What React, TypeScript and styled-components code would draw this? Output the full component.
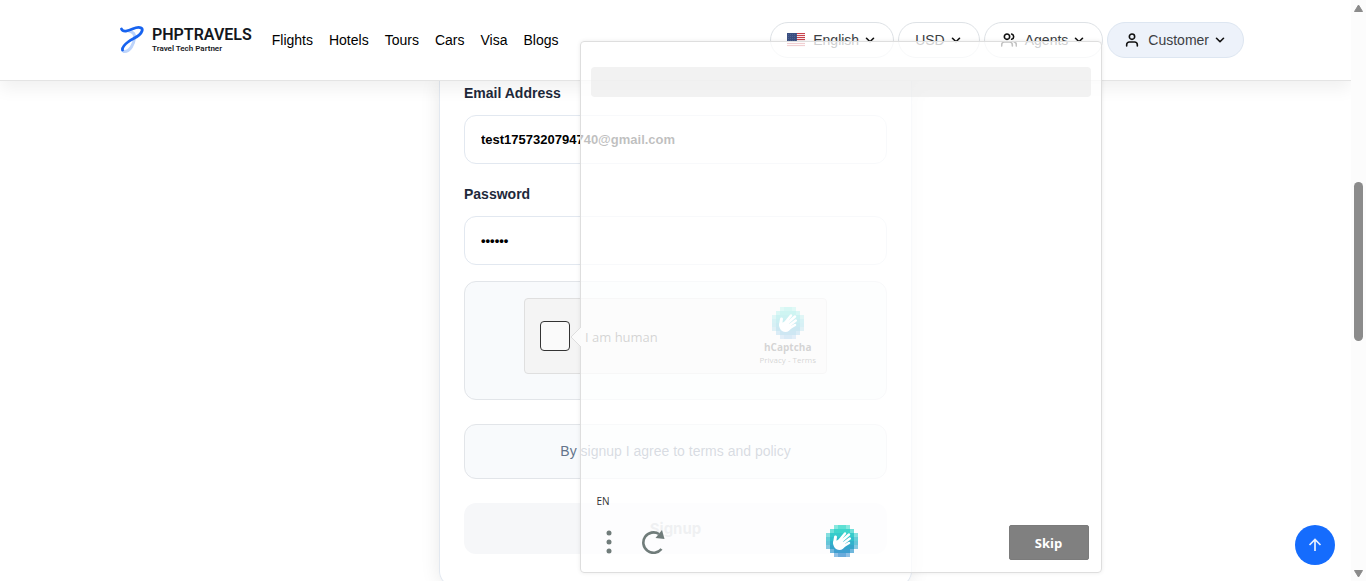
import React from "react";
import styled, { createGlobalStyle } from "styled-components";

const sans = `"Liberation Sans", Arial, sans-serif`;
const captchaFont = `"Open Sans", "Noto Sans", sans-serif`;

const GlobalStyle = createGlobalStyle`
  *, *::before, *::after { box-sizing: border-box; }
  body { margin: 0; background: #fff; color: #000; font-family: ${sans}; font-size: 14px; line-height: 20px; }
  button, input { font: inherit; color: inherit; margin: 0; }
  a { color: inherit; text-decoration: none; }
`;

const Window = styled.div`
  display: flex;
  height: 100vh;
  overflow: hidden;
`;

const Page = styled.div`
  position: relative;
  flex: 1;
  min-width: 0;
  display: flex;
  flex-direction: column;
  overflow: hidden;
`;

const Header = styled.header`
  position: relative;
  z-index: 1;
  flex: none;
  height: 81px;
  background: #fff;
  border-bottom: 1px solid #e4e4e4;
  box-shadow: 0 8px 16px rgba(0, 0, 0, 0.06);
`;

const HeaderInner = styled.div`
  display: flex;
  align-items: center;
  justify-content: space-between;
  height: 80px;
  max-width: 1137px;
  margin: 0 auto;
  padding-left: 12px;
`;

const Cluster = styled.div`
  display: flex;
  align-items: center;
  gap: 20px;
`;

const Brand = styled.a`
  display: flex;
  align-items: center;
  gap: 8px;
  font-family: Roboto, sans-serif;
  color: #14171c;
`;

const BrandText = styled.span`
  display: flex;
  flex-direction: column;
`;

const BrandName = styled.strong`
  font-size: 16px;
  line-height: 18px;
  font-weight: 600;
`;

const BrandTag = styled.span`
  font-size: 8px;
  line-height: 10px;
  font-weight: 600;
`;

const Nav = styled.nav`
  display: flex;
  gap: 16px;
`;

const Pills = styled.div`
  display: flex;
  gap: 4px;
`;

const Pill = styled.button<{ $filled?: boolean }>`
  display: flex;
  align-items: center;
  gap: 8px;
  height: 36px;
  padding: 0 16px;
  border: 1px solid ${(p) => (p.$filled ? "#dde6f1" : "#dee2e6")};
  border-radius: 18px;
  background: ${(p) => (p.$filled ? "#edf2fa" : "#fff")};
  color: #3c4043;
`;

const PillLabel = styled.span`
  display: flex;
  align-items: center;
  gap: 4px;
`;

const Main = styled.main`
  display: flex;
  justify-content: center;
  align-items: flex-start;
`;

const Card = styled.form`
  flex: none;
  width: 473px;
  padding: 2px 24px 32px;
  border: 1px solid #e2e8f0;
  border-top: 0;
  border-radius: 0 0 16px 16px;
  box-shadow: 0 0 20px rgba(0, 0, 0, 0.09);
`;

const Field = styled.div`
  display: flex;
  flex-direction: column;
  gap: 12px;
  margin-bottom: 20px;

  & + & { margin-bottom: 16px; }
`;

const Label = styled.label`
  font-weight: 700;
  color: #1e293b;
`;

const TextInput = styled.input`
  width: 100%;
  height: 49px;
  padding: 0 16px;
  border: 1px solid #e2e8f0;
  border-radius: 12px;
  background: #fff;
  font-size: 13px;
  font-weight: 700;
  color: #000;
`;

const Panel = styled.div`
  display: flex;
  justify-content: center;
  align-items: flex-start;
  min-height: 55px;
  margin-bottom: 24px;
  padding: 16px;
  border: 1px solid #e2e5e9;
  border-radius: 12px;
  background: #f8fafc;
  color: #64748b;
`;

const CaptchaPanel = styled(Panel)`
  height: 119px;
`;

const Captcha = styled.div`
  display: flex;
  align-items: center;
  width: 303px;
  height: 76px;
  padding: 0 10px 0 15px;
  border: 1px solid #dfdfdf;
  border-radius: 4px;
  background: #f4f4f4;
  font-family: ${captchaFont};
  color: #555;
`;

const Check = styled.input`
  appearance: none;
  flex: none;
  width: 30px;
  height: 30px;
  border: 1px solid #333;
  border-radius: 4px;
  background: #fafafa;
`;

const CheckLabel = styled.label`
  flex: 1;
  padding: 2px 0 0 15px;
  font-size: 13px;
`;

const CaptchaBrand = styled.div`
  display: flex;
  flex-direction: column;
  align-items: center;
  font-size: 8px;
  line-height: 10px;
  white-space: nowrap;
`;

const CaptchaName = styled.strong`
  font-size: 10px;
  line-height: 16px;
`;

const Submit = styled.button`
  width: 100%;
  height: 51px;
  border: 0;
  border-radius: 12px;
  background: #f6f7f9;
  color: #bfc4cb;
  font-family: Inter, sans-serif;
  font-size: 15px;
  font-weight: 700;
`;

const Challenge = styled.section`
  position: absolute;
  z-index: 2;
  top: 41px;
  left: calc(50% - 96px);
  display: flex;
  flex-direction: column;
  width: 522px;
  height: 532px;
  padding: 25px 10px 8px;
  border: 1px solid #dedede;
  border-radius: 4px;
  background: rgba(255, 255, 255, 0.75);
  box-shadow: 0 0 4px rgba(0, 0, 0, 0.08);
  font-family: ${captchaFont};
`;

const Pointer = styled.svg`
  position: absolute;
  top: 284px;
  left: -11px;
`;

const Prompt = styled.div`
  height: 30px;
  border-radius: 4px;
  background: rgba(230, 230, 230, 0.5);
`;

const Language = styled.button`
  margin-top: auto;
  align-self: flex-start;
  padding: 0 6px;
  border: 0;
  background: none;
  font-size: 10px;
  line-height: 16px;
  color: #333;
`;

const Footer = styled.footer`
  display: flex;
  align-items: flex-start;
  justify-content: space-between;
  padding: 16px 2px 4px 4px;
`;

const Tools = styled.div`
  display: flex;
  flex: 1;
  gap: 16px;
`;

const ToolButton = styled.button`
  display: flex;
  justify-content: center;
  align-items: center;
  width: 28px;
  height: 34px;
  padding: 0;
  border: 0;
  background: none;
`;

const SkipArea = styled.div`
  display: flex;
  flex: 1;
  justify-content: flex-end;
`;

const Skip = styled.button`
  width: 80px;
  height: 35px;
  border: 1px solid #7b7b7b;
  border-radius: 2px;
  background: #808080;
  color: #fff;
  font-size: 13px;
  font-weight: 700;
`;

const ToTop = styled.button`
  position: absolute;
  right: 16px;
  bottom: 16px;
  display: flex;
  align-items: center;
  justify-content: center;
  width: 40px;
  height: 40px;
  padding: 0;
  border: 0;
  border-radius: 50%;
  background: #156cfd;
`;

const Scrollbar = styled.div`
  flex: none;
  display: flex;
  flex-direction: column;
  align-items: center;
  width: 15px;
  padding: 4px 0 3px;
  background: #fcfcfc;
`;

const Track = styled.div`
  flex: 1;
  width: 9px;
  padding-top: 170px;
`;

const Thumb = styled.div`
  height: 159px;
  border-radius: 5px;
  background: #8b8b8b;
`;

const Chevron = () => (
  <svg width="14" height="14" viewBox="0 0 24 24" fill="none" stroke="#111" strokeWidth="2.8" strokeLinecap="round" strokeLinejoin="round">
    <path d="M6 9l6 6 6-6" />
  </svg>
);

const Flag = () => (
  <svg width="18" height="14" viewBox="0 0 18 14" shapeRendering="crispEdges">
    <rect width="18" height="14" fill="#f7e9ea" />
    {[0, 2, 4, 6, 8, 10, 12].map((y) => (
      <rect key={y} y={y} width="18" height="1" fill="#c8414b" />
    ))}
    <rect width="10" height="8" fill="#3a4f80" />
    {[1, 3, 5, 7].map((y) =>
      [1, 3, 5, 7, 9].map((x) => <rect key={`${x}-${y}`} x={x} y={y} width="1" height="1" fill="#4f6294" />)
    )}
  </svg>
);

const Person = ({ pair = false }: { pair?: boolean }) => (
  <svg width="16" height="16" viewBox="0 0 24 24" fill="none" stroke="#111" strokeWidth="2.4" strokeLinecap="round" strokeLinejoin="round">
    {pair ? (
      <>
        <path d="M17 21v-2a4 4 0 0 0-4-4H5a4 4 0 0 0-4 4v2" />
        <circle cx="9" cy="7" r="4" />
        <path d="M23 21v-2a4 4 0 0 0-3-3.870M16 3.130a4 4 0 0 1 0 7.750" />
      </>
    ) : (
      <>
        <path d="M20 21v-2a4 4 0 0 0-4-4H8a4 4 0 0 0-4 4v2" />
        <circle cx="12" cy="7" r="4" />
      </>
    )}
  </svg>
);

const BrandMark = () => (
  <svg width="25" height="28" viewBox="0 0 25 28" fill="none" strokeLinecap="round">
    <path d="M10 5C15 6 16 9 15.500 12C15 18 11 26 5 25.500" stroke="#bdd4fb" strokeWidth="3" />
    <path d="M2.500 3C4 6.500 9 5 14 2.800C19 0.500 24.500 1 23 5C21 11 14 12 9 16C5 19 3 21 3.500 24" stroke="#1763ef" strokeWidth="2.800" />
  </svg>
);

const rows = ["00111100", "01111110", "11111111", "11111111", "11111111", "11111111", "01111110", "00111100"];
const rowColors = ["#5fe0d4", "#3fd5cc", "#35cbcb", "#30bfcb", "#31b1cb", "#35a5cb", "#3f9fd0", "#6aabdc"];

const HandLogo = () => (
  <svg width="32" height="32" viewBox="0 0 32 32">
    <g shapeRendering="crispEdges">
      {rows.map((row, y) =>
        row.split("").map((on, x) => {
          if (on === "0") return null;
          const side = x === 0 || x === 7;
          const corner = ((y === 0 || y === 7) && (x === 2 || x === 5)) || ((y === 1 || y === 6) && (x === 1 || x === 6));
          const opacity = side && (y === 2 || y === 5) ? 0.6 : side || corner ? 0.75 : 1;
          return <rect key={`${x}-${y}`} x={x * 4} y={y * 4} width="4" height="4" fill={rowColors[y]} opacity={opacity} />;
        })
      )}
    </g>
    <g stroke="#fff" strokeLinecap="round" fill="none">
      <path d="M9.500 12L8.500 18" strokeWidth="3" />
      <path d="M12 17L19 8.500M14 17.500L23 9.500M16 19.500L23.800 13.500" strokeWidth="2.500" />
      <path d="M17 21.500L23 18" strokeWidth="2.500" />
    </g>
    <path d="M7 17C8 15 11 16 13 14.500L18 17L20.500 20C18 23 16 25 13.500 25C9 25 7 21 7 17Z" fill="#fff" />
  </svg>
);

export default function App() {
  return (
    <Window>
      <GlobalStyle />
      <Page>
        <Header>
          <HeaderInner>
            <Cluster>
              <Brand href="#">
                <BrandMark />
                <BrandText>
                  <BrandName>PHPTRAVELS</BrandName>
                  <BrandTag>Travel Tech Partner</BrandTag>
                </BrandText>
              </Brand>
              <Nav>
                {["Flights", "Hotels", "Tours", "Cars", "Visa", "Blogs"].map((item) => (
                  <a key={item} href="#">{item}</a>
                ))}
              </Nav>
            </Cluster>
            <Pills>
              <Pill><Flag /><PillLabel>English<Chevron /></PillLabel></Pill>
              <Pill><PillLabel>USD<Chevron /></PillLabel></Pill>
              <Pill><Person pair /><PillLabel>Agents<Chevron /></PillLabel></Pill>
              <Pill $filled><Person /><PillLabel>Customer<Chevron /></PillLabel></Pill>
            </Pills>
          </HeaderInner>
        </Header>

        <Main>
          <Card onSubmit={(e) => e.preventDefault()}>
            <Field>
              <Label htmlFor="email">Email Address</Label>
              <TextInput id="email" type="email" defaultValue="test1757320794740@gmail.com" />
            </Field>
            <Field>
              <Label htmlFor="password">Password</Label>
              <TextInput id="password" type="password" defaultValue="secret" />
            </Field>
            <CaptchaPanel>
              <Captcha>
                <Check id="human" type="checkbox" />
                <CheckLabel htmlFor="human">I am human</CheckLabel>
                <CaptchaBrand>
                  <HandLogo />
                  <CaptchaName>hCaptcha</CaptchaName>
                  <span><a href="#">Privacy</a> - <a href="#">Terms</a></span>
                </CaptchaBrand>
              </Captcha>
            </CaptchaPanel>
            <Panel><a href="#">By signup I agree to terms and policy</a></Panel>
            <Submit disabled>Signup</Submit>
          </Card>
        </Main>

        <Challenge>
          <Pointer width="11" height="22" viewBox="0 0 11 22">
            <path d="M11 1L1 11L11 21Z" fill="#fbfbfb" />
            <path d="M11 1L1 11L11 21" fill="none" stroke="#dedede" />
          </Pointer>
          <Prompt />
          <Language>EN</Language>
          <Footer>
            <Tools>
              <ToolButton aria-label="More options">
                <svg width="6" height="24" viewBox="0 0 6 24" fill="#707c7a">
                  <circle cx="3" cy="3" r="2.500" /><circle cx="3" cy="12" r="2.500" /><circle cx="3" cy="21" r="2.500" />
                </svg>
              </ToolButton>
              <ToolButton aria-label="Refresh challenge">
                <svg width="24" height="24" viewBox="0 0 24 24">
                  <path d="M20.500 19A10.200 10.200 0 1 1 18 4" fill="none" stroke="#707c7a" strokeWidth="2.600" />
                  <path d="M21 0L23.500 9L14.500 8Z" fill="#707c7a" />
                </svg>
              </ToolButton>
            </Tools>
            <HandLogo />
            <SkipArea><Skip>Skip</Skip></SkipArea>
          </Footer>
        </Challenge>

        <ToTop aria-label="Back to top">
          <svg width="14" height="14" viewBox="0 0 14 14" fill="none" stroke="#e8f0ff" strokeWidth="1.700">
            <path d="M7 13V2M1.500 7L7 1.500L12.500 7" />
          </svg>
        </ToTop>
      </Page>

      <Scrollbar>
        <svg width="9" height="8" viewBox="0 0 9 8"><path d="M4.500 1L8.500 7.500H0.500Z" fill="#8b8b8b" stroke="#8b8b8b" strokeLinejoin="round" /></svg>
        <Track><Thumb /></Track>
        <svg width="9" height="8" viewBox="0 0 9 8"><path d="M0.500 0.500H8.500L4.500 7Z" fill="#8b8b8b" stroke="#8b8b8b" strokeLinejoin="round" /></svg>
      </Scrollbar>
    </Window>
  );
}
